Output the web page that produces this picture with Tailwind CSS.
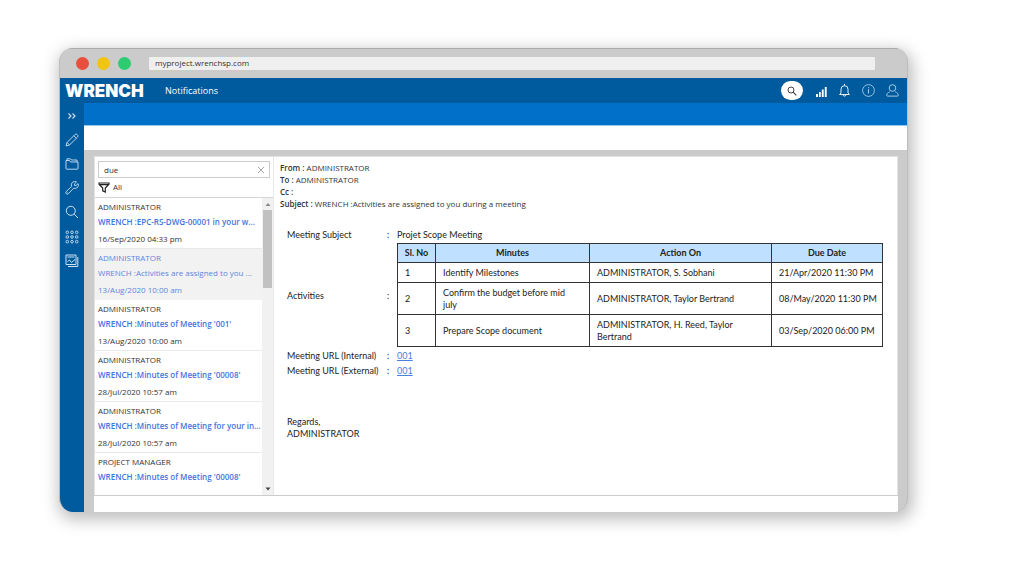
<!DOCTYPE html>
<html lang="en">
<head>
<meta charset="utf-8">
<meta name="viewport" content="width=device-width, initial-scale=1">
<title>Notifications</title>
<script src="https://cdn.jsdelivr.net/npm/@tailwindcss/browser@4"></script>
</head>
<body class="bg-white pt-12 pl-[59px] pr-[116px] pb-16 font-['Open_Sans',sans-serif] text-[#333]">
<div class="rounded-[14px] overflow-hidden bg-[#cbcbcb] border-l border-r border-[#bcbcbc] shadow-[2px_5px_16px_3px_rgba(0,0,0,0.25)]">
  <div class="flex items-center h-[30px] pl-4 pr-8 border-t border-[#aaa]">
    <div class="flex gap-2">
      <span class="size-[13px] rounded-full bg-[#e94f3d]"></span>
      <span class="size-[13px] rounded-full bg-[#f1c40f]"></span>
      <span class="size-[13px] rounded-full bg-[#2ecc71]"></span>
    </div>
    <input type="text" aria-label="Address" value="myproject.wrenchsp.com" class="ml-[18px] flex-1 min-w-0 h-[13px] rounded-[1px] bg-[#efefef] px-[6px] pb-[3px] text-[8px] leading-[10px] outline-none">
  </div>

  <header class="flex items-center h-[25px] bg-[#005a9e] text-white pl-[5px] pr-1">
    <span class="w-[100px] font-['Inter',sans-serif] font-black text-[17px] leading-6">WRENCH</span>
    <h1 class="text-[9px]">Notifications</h1>
    <div class="ml-auto flex items-center">
      <button aria-label="Search" class="flex items-center justify-center w-[22px] h-[19px] rounded-full bg-white text-[#444] mr-[13px]">
        <svg class="size-[10px]" viewBox="0 0 10 10" fill="none" stroke="currentColor"><circle cx="4" cy="4" r="3"/><path d="M6.2 6.2 9.3 9.3" stroke-width="1.2"/></svg>
      </button>
      <button aria-label="Signal" class="mr-3"><svg class="w-[11px] h-3" viewBox="0 0 11 12" fill="currentColor"><path d="M0 9h2v3H0zM3 7h1.800v5H3zM5.800 4.500h1.900v7.500h-1.900zM8.800 2h1.900v10h-1.900z"/></svg></button>
      <button aria-label="Alerts" class="mr-3"><svg class="w-[11px] h-[13px]" viewBox="0 0 11 13" fill="none" stroke="currentColor" stroke-width=".9"><path d="M5.500 0v1.500M2 9V5.200a3.500 3.500 0 0 1 7 0V9l1.400 1.500H.6zM4 11c.4 1.500 2.600 1.500 3 0"/></svg></button>
      <button aria-label="Information" class="mr-[11px]"><svg class="size-[13px]" viewBox="0 0 13 13" fill="none" stroke="#a9cbe6" stroke-width=".9"><circle cx="6.500" cy="6.500" r="5.900"/><path d="M6.500 5.300v4.200M6.500 3.200v1.100" stroke-width="1.100"/></svg></button>
      <button aria-label="Account" class="mr-1"><svg class="w-[13px] h-[13px]" viewBox="0 0 13 13" fill="none" stroke="#a9cbe6"><circle cx="6.500" cy="4" r="3.300"/><path d="M3.800 7.800C1.800 8.600.7 9.800.7 11.300c0 .5.300.8.800.8h10c.5 0 .8-.3.800-.8 0-1.500-1.100-2.700-3.100-3.500"/></svg></button>
    </div>
  </header>

  <div class="flex">
    <nav class="w-6 shrink-0 bg-[#005a9e] text-[#cfe2f2] flex flex-col items-center pt-[6px] gap-[10px]">
      <button aria-label="Expand"><svg class="w-[14px] h-[14px]" viewBox="0 0 14 14" fill="none" stroke="currentColor" stroke-width="1.100"><path d="M3.500 4.500 6 7 3.500 9.500M7.500 4.500 10 7 7.500 9.500"/></svg></button>
      <button aria-label="Edit"><svg class="w-[14px] h-[14px]" viewBox="0 0 14 14" fill="none" stroke="currentColor" stroke-width=".9"><path d="M1 13 2 9.500 10 1.500c1.500-1.200 3.700.8 2.600 2.500l-8.100 8zM8.800 2.700l2.600 2.600M2 9.500 4.500 12"/></svg></button>
      <button aria-label="Folders"><svg class="w-[14px] h-[14px]" viewBox="0 0 14 14" fill="none" stroke="currentColor" stroke-width=".9"><path d="M1 11.500V3.500h3.500l1.200 1.500H13v6.500c0 .5-.2.700-.7.700H1.700c-.5 0-.7-.2-.7-.7zM2 3.500V1.800h3.500l1 1.200h5.500v2"/></svg></button>
      <button aria-label="Tools"><svg class="w-[14px] h-[14px]" viewBox="0 0 14 14" fill="none" stroke="currentColor" stroke-width=".9"><path d="M11.500.9a3.400 3.400 0 0 0-4.800 4.400L1 10.800c-.9 1.400.8 3 2.200 2.100L8.700 7.200a3.400 3.400 0 0 0 4.400-4.600L11 4.500 9.500 4.300 9.400 2.900zM2.300 11.500h.5"/></svg></button>
      <button aria-label="Find"><svg class="w-[14px] h-[14px]" viewBox="0 0 14 14" fill="none" stroke="currentColor"><circle cx="5.800" cy="5.800" r="4.500"/><path d="M9.200 9.200 13 13"/></svg></button>
      <button aria-label="Apps" class="mt-px"><svg class="w-[14px] h-[14px]" viewBox="0 0 14 14" fill="none" stroke="currentColor" stroke-width=".9"><circle cx="2.300" cy="2.300" r="1.300"/><circle cx="7" cy="2.300" r="1.300"/><circle cx="11.700" cy="2.300" r="1.300"/><circle cx="2.300" cy="7" r="1.300"/><circle cx="7" cy="7" r="1.300"/><circle cx="11.700" cy="7" r="1.300"/><circle cx="2.300" cy="11.700" r="1.300"/><circle cx="7" cy="11.700" r="1.300"/><circle cx="11.700" cy="11.700" r="1.300"/></svg></button>
      <button aria-label="Reports"><svg class="w-[14px] h-[14px]" viewBox="0 0 14 14" fill="none" stroke="currentColor"><path d="M1 1h10v9.500H1zM12.800 3v9.500H3M2.500 3h7M2.500 7.500 4.500 6l2 2.500L10 5.500"/></svg></button>
    </nav>

    <div class="flex-1 min-w-0">
      <div class="h-[22px] bg-[#0070c8]"></div>
      <div class="h-[25px] bg-white border-t border-[#9cc8ea]"></div>
      <main class="pt-[6px] pl-[10px] pr-[9px]">
        <div class="flex border border-b-0 border-[#e3e3e3] bg-white">
          <section class="w-[179px] shrink-0 border-r border-[#e8e8e8]">
            <div class="px-[3px] pt-1 h-[41px] border-b border-[#d5d5d5]">
              <div class="flex items-center h-[17px] border border-[#ccc] pl-[5px] pr-1">
                <input type="text" aria-label="Search notifications" value="due" class="flex-1 min-w-0 text-[8px] leading-[14px] outline-none">
                <button aria-label="Clear"><svg class="size-2" viewBox="0 0 8 8" stroke="#aaa" fill="none"><path d="M1 1 7 7M7 1 1 7"/></svg></button>
              </div>
              <button class="flex items-center gap-[3px] h-[18px] text-[8px]">
                <svg class="w-3 h-[11px]" viewBox="0 0 12 11" fill="none" stroke="#222" stroke-width="1.200"><path d="M1 1h10v1.200L7.300 6v4L4.700 8.800V6L1 2.200zM2 2.600h8"/></svg>All
              </button>
            </div>
            <div class="flex h-[297px] overflow-hidden text-[8px]">
              <ul class="flex-1 min-w-0">
                <li class="h-[51px] px-[3px] pt-[3px] border-b border-[#e8e8e8]">
                  <p class="leading-3">ADMINISTRATOR</p><a href="#" class="block whitespace-nowrap font-semibold text-[#3f74e0] leading-[18px]">WRENCH :EPC-RS-DWG-00001 in your w...</a><p class="leading-4">16/Sep/2020 04:33 pm</p></li>
                <li class="h-[51px] px-[3px] pt-[3px] border-b border-[#f2f2f2] bg-[#f2f2f2] text-[#5b86df]">
                  <p class="leading-3">ADMINISTRATOR</p><a href="#" class="block whitespace-nowrap leading-[18px]">WRENCH :Activities are assigned to you ...</a><p class="leading-4">13/Aug/2020 10:00 am</p></li>
                <li class="h-[51px] px-[3px] pt-[3px] border-b border-[#e8e8e8]">
                  <p class="leading-3">ADMINISTRATOR</p><a href="#" class="block whitespace-nowrap font-semibold text-[#3f74e0] leading-[18px]">WRENCH :Minutes of Meeting '001'</a><p class="leading-4">13/Aug/2020 10:00 am</p></li>
                <li class="h-[51px] px-[3px] pt-[3px] border-b border-[#e8e8e8]">
                  <p class="leading-3">ADMINISTRATOR</p><a href="#" class="block whitespace-nowrap font-semibold text-[#3f74e0] leading-[18px]">WRENCH :Minutes of Meeting '00008'</a><p class="leading-4">28/Jul/2020 10:57 am</p></li>
                <li class="h-[51px] px-[3px] pt-[3px] border-b border-[#e8e8e8]">
                  <p class="leading-3">ADMINISTRATOR</p><a href="#" class="block whitespace-nowrap font-semibold text-[#3f74e0] leading-[18px]">WRENCH :Minutes of Meeting for your in...</a><p class="leading-4">28/Jul/2020 10:57 am</p></li>
                <li class="px-[3px] pt-[3px]">
                  <p class="leading-3">PROJECT MANAGER</p><a href="#" class="block whitespace-nowrap font-semibold text-[#3f74e0] leading-[18px]">WRENCH :Minutes of Meeting '00008'</a></li>
              </ul>
              <div class="w-[11px] shrink-0 bg-[#f1f1f1] flex flex-col items-center px-px">
                <svg class="w-[6px] h-3 shrink-0" viewBox="0 0 6 12" fill="#888"><path d="M.5 8 3 5l2.500 3z"/></svg>
                <div class="w-full h-[78px] bg-[#c1c1c1]"></div>
                <svg class="w-[6px] h-3 shrink-0 mt-auto" viewBox="0 0 6 12" fill="#444"><path d="M.5 4.500 3 7.500l2.500-3z"/></svg>
              </div>
            </div>
          </section>

          <article class="flex-1 min-w-0 pl-[6px] pr-[14px] pt-[5px]">
            <div class="text-[8px] leading-[12px] pb-[17px]">
              <p><b class="font-semibold">From :</b> ADMINISTRATOR</p>
              <p><b class="font-semibold">To :</b> ADMINISTRATOR</p>
              <p><b class="font-semibold">Cc :</b></p>
              <p><b class="font-semibold">Subject :</b> WRENCH :Activities are assigned to you during a meeting</p>
            </div>
            <div class="pl-[7px] font-['Lato',sans-serif] text-[9px] text-[#222]">
              <div class="grid grid-cols-[100px_10px_1fr] items-center leading-[15px]">
                <span>Meeting Subject</span><span>:</span><span>Projet Scope Meeting</span>
                <span>Activities</span><span>:</span>
                <table class="w-full table-fixed border-collapse my-px text-left leading-3 [&_th]:border [&_td]:border [&_th]:border-[#333] [&_td]:border-[#333] [&_td]:px-[7px] [&_td]:py-[3px]">
                  <colgroup><col class="w-[38px]"><col class="w-[154px]"><col><col class="w-[111px]"></colgroup>
                  <thead><tr class="h-[19px] bg-[#bfe1ff] text-center"><th>Sl. No</th><th>Minutes</th><th>Action On</th><th>Due Date</th></tr></thead>
                  <tbody>
                    <tr class="h-5"><td>1</td><td>Identify Milestones</td><td>ADMINISTRATOR, S. Sobhani</td><td class="whitespace-nowrap">21/Apr/2020 11:30 PM</td></tr>
                    <tr class="h-8"><td>2</td><td>Confirm the budget before mid<br>july</td><td>ADMINISTRATOR, Taylor Bertrand</td><td class="whitespace-nowrap">08/May/2020 11:30 PM</td></tr>
                    <tr class="h-8"><td>3</td><td>Prepare Scope document</td><td>ADMINISTRATOR, H. Reed, Taylor<br>Bertrand</td><td class="whitespace-nowrap">03/Sep/2020 06:00 PM</td></tr>
                  </tbody>
                </table>
                <span>Meeting URL (Internal)</span><span>:</span><a href="#" class="text-[#4a80e0] underline">001</a>
                <span>Meeting URL (External)</span><span>:</span><a href="#" class="text-[#4a80e0] underline">001</a>
              </div>
              <p class="mt-[38px] leading-3">Regards,</p>
              <p class="leading-3">ADMINISTRATOR</p>
            </div>
          </article>
        </div>
        <footer class="h-[17px] bg-white border-t border-[#ccc]"></footer>
      </main>
    </div>
  </div>
</div>
</body>
</html>
